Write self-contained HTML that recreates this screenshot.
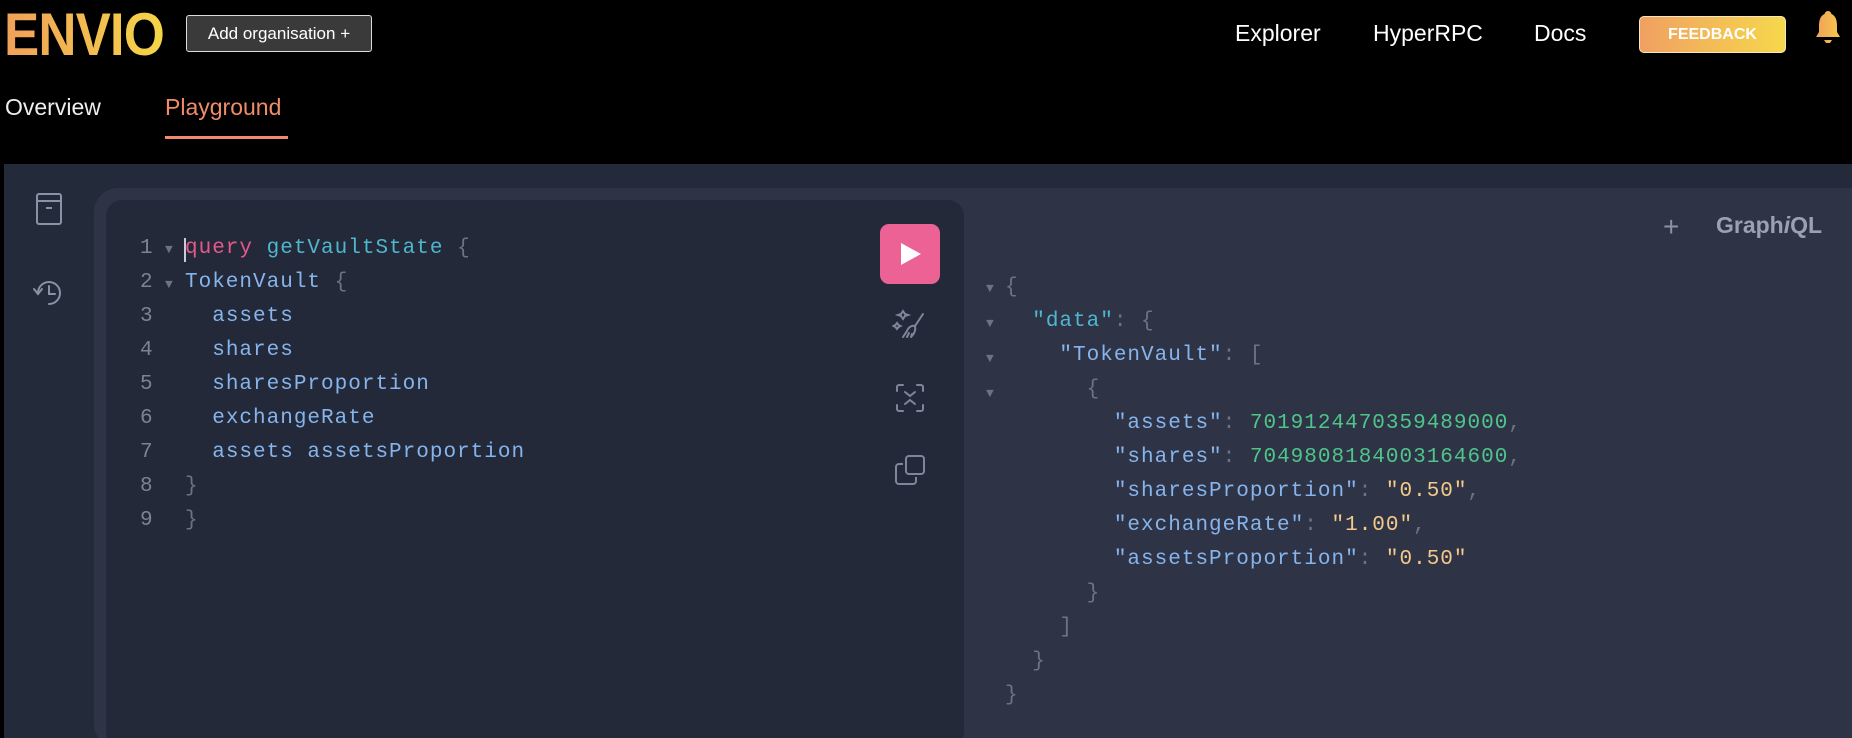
<!DOCTYPE html>
<html><head><meta charset="utf-8"><style>
*{margin:0;padding:0;box-sizing:border-box}
html,body{width:1852px;height:738px;overflow:hidden}
body{background:#000;position:relative;font-family:"Liberation Sans",sans-serif}
.a{position:absolute;white-space:pre}
.logo{left:4px;top:4px;font-size:60px;font-weight:bold;letter-spacing:-1px;background:linear-gradient(90deg,#f0a05a,#f5d547);-webkit-background-clip:text;color:transparent;line-height:62px;transform:scaleX(0.88);transform-origin:left}
.addorg{left:186px;top:15px;width:186px;height:37px;background:#3a3a3a;border:1px solid #ddd;border-radius:3px;color:#fff;font-size:17px;line-height:35px;text-align:center}
.nav{color:#fff;font-size:23px;top:20px}
.fb{left:1639px;top:16px;width:147px;height:37px;border-radius:5px;background:linear-gradient(90deg,#f0a062,#f6d84c);border:1px solid #f5e5c0;color:#fff;font-weight:bold;font-size:16px;text-align:center;line-height:35px}
.tab{top:94px;font-size:23px}
.main{left:4px;top:164px;width:1848px;height:574px;background:#232a39}
.outer{left:94px;top:188px;width:1780px;height:560px;background:#2e3446;border-radius:24px}
.ed{left:106px;top:200px;width:858px;height:548px;background:#232938;border-radius:16px}
.code{font-family:"Liberation Mono",monospace;font-size:21px;letter-spacing:1px;line-height:34px}
.ln{color:#7b8394}
.g{color:#6b7385}.k{color:#e5598a}.d{color:#4fb6cf}.f{color:#86b4ec}.n{color:#4ec58a}.s{color:#f4c98c}.t{color:#6b7385;font-size:13px}
</style></head><body>
<div class="a logo">ENVIO</div>
<div class="a addorg">Add organisation +</div>
<div class="a nav" style="left:1235px">Explorer</div>
<div class="a nav" style="left:1373px">HyperRPC</div>
<div class="a nav" style="left:1534px">Docs</div>
<div class="a fb">FEEDBACK</div>
<svg class="a" style="left:1812px;top:9px" width="32" height="38" viewBox="0 0 32 38"><defs><linearGradient id="bg" x1="0" x2="1"><stop offset="0" stop-color="#f0a05a"/><stop offset="1" stop-color="#f6c84c"/></linearGradient></defs><path d="M16 2c-2 0-3 1.5-3.5 3C8 7 7 12 7 17v6l-3 5h24l-3-5v-6c0-5-1-10-5.5-12C19 3.5 18 2 16 2z" fill="url(#bg)"/><path d="M12 31h8l-2 3h-4z" fill="url(#bg)"/></svg>
<div class="a tab" style="left:5px;color:#eee">Overview</div>
<div class="a tab" style="left:165px;color:#f08c6c">Playground</div>
<div class="a" style="left:165px;top:136px;width:123px;height:3px;background:#f08c6c"></div>
<div class="a main"></div>
<svg class="a" style="left:34px;top:192px" width="30" height="34" viewBox="0 0 30 34" fill="none" stroke="#8a92a3" stroke-width="2"><rect x="3" y="2" width="24" height="30" rx="2"/><path d="M3 9h24M12 16h6"/></svg>
<svg class="a" style="left:32px;top:277px" width="34" height="32" viewBox="0 0 34 32" fill="none" stroke="#8a92a3" stroke-width="2" stroke-linecap="round"><path d="M6 16a11 11 0 1 1 11 11"/><path d="M2 12l4 5 4-5"/><path d="M17 9v8h6"/></svg>
<div class="a outer"></div>
<div class="a ed"></div>
<div class="a code" style="left:140px;top:232px"><span class="ln">1
2
3
4
5
6
7
8
9</span></div>
<div class="a code" style="left:165px;top:232px"><span class="t">▼
▼</span></div>
<div class="a" style="left:184px;top:238px;width:2px;height:24px;background:#c8ccd4"></div>
<div class="a code" style="left:185px;top:232px"><span class="k">query</span> <span class="d">getVaultState</span> <span class="g">{</span>
<span class="f">TokenVault</span> <span class="g">{</span>
  <span class="f">assets</span>
  <span class="f">shares</span>
  <span class="f">sharesProportion</span>
  <span class="f">exchangeRate</span>
  <span class="f">assets assetsProportion</span>
<span class="g">}</span>
<span class="g">}</span></div>
<div class="a" style="left:880px;top:224px;width:60px;height:60px;background:#ec6294;border-radius:9px"></div>
<svg class="a" style="left:897px;top:241px" width="26" height="26" viewBox="0 0 26 26"><path d="M4 2l20 11-20 11z" fill="#fff"/></svg>
<svg class="a" style="left:892px;top:306px" width="36" height="36" viewBox="0 0 36 36" fill="none" stroke="#7e8799" stroke-width="2" stroke-linecap="round"><path d="M11 5l2 3 3 1-3 1-2 3-2-3-3-1 3-1z"/><path d="M5 17l1.5 2 2 1-2 1-1.5 2-1.5-2-2-1 2-1z"/><path d="M31 8l-8 12M23 20c-4-1-7 2-8 5l-4 6M23 20c1 4-1 8-4 11M15 31l2-4M19 31l1-3"/></svg>
<svg class="a" style="left:894px;top:382px" width="32" height="32" viewBox="0 0 32 32" fill="none" stroke="#7e8799" stroke-width="2" stroke-linecap="round"><path d="M3 9V5a2 2 0 0 1 2-2h4M23 3h4a2 2 0 0 1 2 2v4M29 23v4a2 2 0 0 1-2 2h-4M9 29H5a2 2 0 0 1-2-2v-4"/><path d="M11 10l5 4 5-4M11 22l5-4 5 4"/></svg>
<svg class="a" style="left:894px;top:454px" width="32" height="32" viewBox="0 0 32 32" fill="none" stroke="#7e8799" stroke-width="2"><rect x="12" y="2" width="18" height="18" rx="3"/><path d="M9 10H5a3 3 0 0 0-3 3v14a3 3 0 0 0 3 3h14a3 3 0 0 0 3-3v-4"/></svg>
<div class="a" style="left:1663px;top:211px;color:#8a92a3;font-size:28px;font-weight:300">+</div>
<div class="a" style="left:1716px;top:212px;color:#9aa1b0;font-size:23px;font-weight:bold">Graph<i>i</i>QL</div>
<div class="a code" style="left:986px;top:271px"><span class="t">▼
▼
▼
▼</span></div>
<div class="a code" style="left:1005px;top:271px"><span class="g">{</span>
  <span class="d">"data"</span><span class="g">: {</span>
    <span class="f">"TokenVault"</span><span class="g">: [</span>
      <span class="g">{</span>
        <span class="f">"assets"</span><span class="g">:</span> <span class="n">7019124470359489000</span><span class="g">,</span>
        <span class="f">"shares"</span><span class="g">:</span> <span class="n">7049808184003164600</span><span class="g">,</span>
        <span class="f">"sharesProportion"</span><span class="g">:</span> <span class="s">"0.50"</span><span class="g">,</span>
        <span class="f">"exchangeRate"</span><span class="g">:</span> <span class="s">"1.00"</span><span class="g">,</span>
        <span class="f">"assetsProportion"</span><span class="g">:</span> <span class="s">"0.50"</span>
      <span class="g">}</span>
    <span class="g">]</span>
  <span class="g">}</span>
<span class="g">}</span></div>
</body></html>
